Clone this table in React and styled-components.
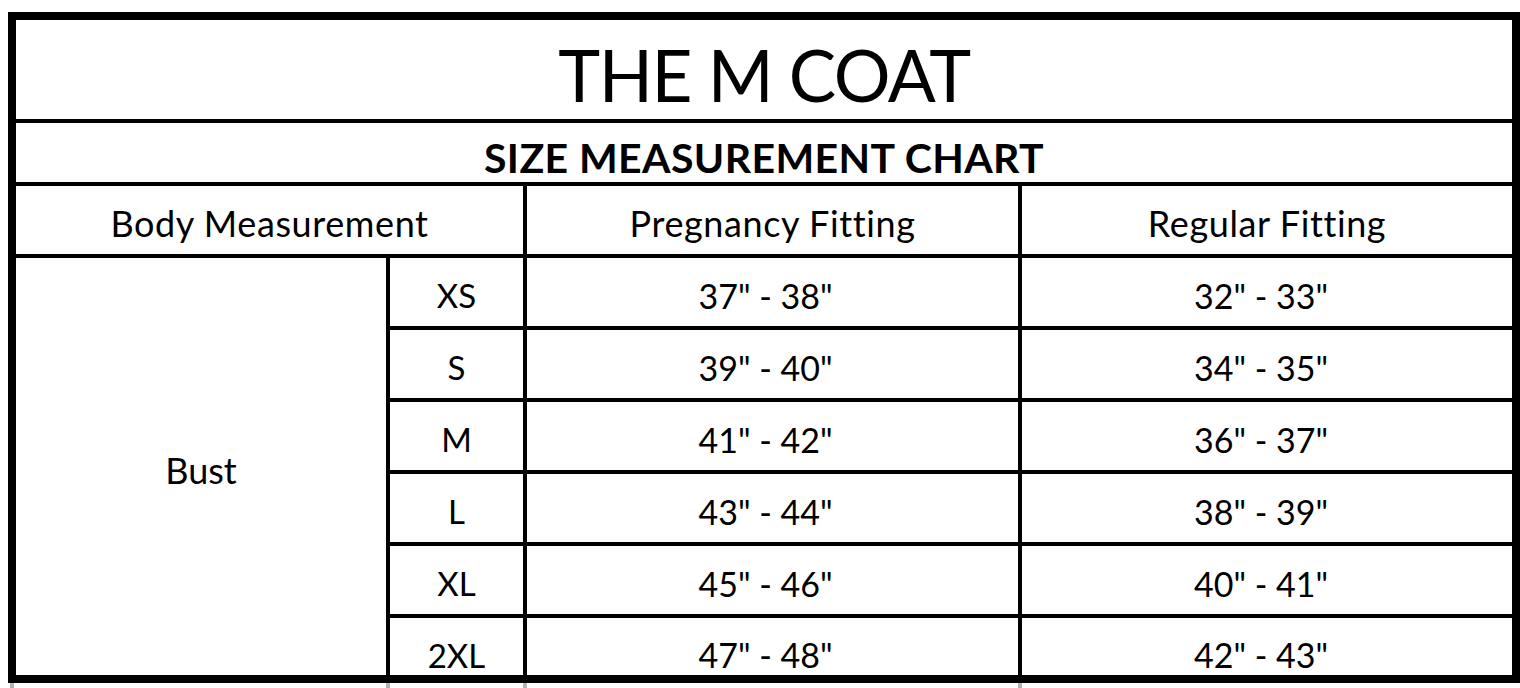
import React from "react";
import styled, { createGlobalStyle } from "styled-components";

const Global = createGlobalStyle`
  html, body {
    margin: 0;
    padding: 0;
    background: #fff;
    overflow: hidden;
  }
  body {
    font-family: Lato, "Open Sans", sans-serif;
    color: #000;
  }
`;

const Page = styled.div`
  padding: 12px 0 0 8px;
  height: 688px;
  box-sizing: border-box;
`;

const Chart = styled.div`
  display: grid;
  grid-template-columns: 370px 133px 491px 490px;
  grid-template-rows: 99px 59px 68px repeat(5, 68px) 57px;
  gap: 4px;
  width: max-content;
  background: #000;
  border: 8px solid #000;
`;

const Cell = styled.div`
  background: #fff;
  display: flex;
  align-items: center;
  justify-content: center;
  font-size: ${(p) => p.$size || 34}px;
  font-weight: ${(p) => (p.$bold ? 700 : 400)};
  letter-spacing: ${(p) => p.$track || 0}px;
  padding-top: ${(p) => p.$shift || 6}px;
  padding-right: ${(p) => p.$right || 0}px;
  box-sizing: border-box;
  grid-column: ${(p) => p.$span || "auto"};
  grid-row: ${(p) => p.$rows || "auto"};
  white-space: nowrap;
`;

/* faint sheet gridlines showing below the chart */
const Gridlines = styled.div`
  display: grid;
  grid-template-columns: 370px 133px 491px 490px;
  gap: 4px;
  padding: 0 8px;
  height: 6px;
`;

const Tick = styled.div`
  margin-left: ${(p) => p.$pull || -4}px;
  border-left: 4px solid #b4b4b4;
`;

const rows = [
  ["XS", '37" - 38"', '32" - 33"'],
  ["S", '39" - 40"', '34" - 35"'],
  ["M", '41" - 42"', '36" - 37"'],
  ["L", '43" - 44"', '38" - 39"'],
  ["XL", '45" - 46"', '40" - 41"'],
  ["2XL", '47" - 48"', '42" - 43"'],
];

export default function App() {
  return (
    <Page>
      <Global />
      <Chart>
        <Cell $span="1 / 5" $size={71} $track={-1.5} $shift={10}>THE M COAT</Cell>
        <Cell $span="1 / 5" $size={41} $bold $track={0.4} $shift={10}>SIZE MEASUREMENT CHART</Cell>
        <Cell $span="1 / 3" $size={36} $track={0.6}>Body Measurement</Cell>
        <Cell $size={36} $track={0.6}>Pregnancy Fitting</Cell>
        <Cell $size={36} $track={0.6}>Regular Fitting</Cell>
        <Cell $rows="4 / 10" $size={36}>Bust</Cell>
        {rows.map(([size, preg, reg], i) => {
          const shift = i === rows.length - 1 ? 16 : 6;
          return (
            <React.Fragment key={size}>
              <Cell $size={33} $shift={shift}>{size}</Cell>
              <Cell $shift={shift} $right={14}>{preg}</Cell>
              <Cell $shift={shift} $right={12}>{reg}</Cell>
            </React.Fragment>
          );
        })}
      </Chart>
      <Gridlines>
        <Tick $pull={-6} />
        <Tick />
        <Tick />
        <Tick />
      </Gridlines>
    </Page>
  );
}
